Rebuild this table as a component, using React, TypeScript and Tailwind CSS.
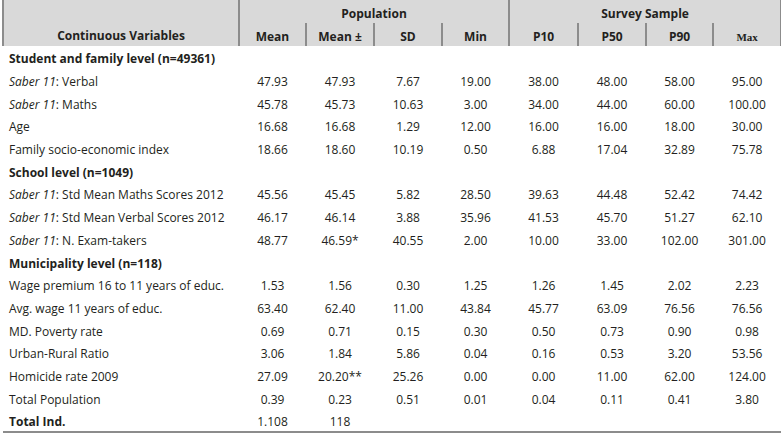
import React from 'react';

type Row = {
    label: React.ReactNode;
    values?: string[];
    bold?: boolean;
};

const saber = <><i>Saber 11</i>: </>;

const rows: Row[] = [
    { label: <>Student and family level (n=49361)</>, bold: true },
    { label: <>{saber}Verbal</>, values: ['47.93', '47.93', '7.67', '19.00', '38.00', '48.00', '58.00', '95.00'] },
    { label: <>{saber}Maths</>, values: ['45.78', '45.73', '10.63', '3.00', '34.00', '44.00', '60.00', '100.00'] },
    { label: 'Age', values: ['16.68', '16.68', '1.29', '12.00', '16.00', '16.00', '18.00', '30.00'] },
    { label: 'Family socio-economic index', values: ['18.66', '18.60', '10.19', '0.50', '6.88', '17.04', '32.89', '75.78'] },
    { label: <>School level (n=1049)</>, bold: true },
    { label: <>{saber}Std Mean Maths Scores 2012</>, values: ['45.56', '45.45', '5.82', '28.50', '39.63', '44.48', '52.42', '74.42'] },
    { label: <>{saber}Std Mean Verbal Scores 2012</>, values: ['46.17', '46.14', '3.88', '35.96', '41.53', '45.70', '51.27', '62.10'] },
    { label: <>{saber}N. Exam-takers</>, values: ['48.77', '46.59*', '40.55', '2.00', '10.00', '33.00', '102.00', '301.00'] },
    { label: <>Municipality level (n=118)</>, bold: true },
    { label: 'Wage premium 16 to 11 years of educ.', values: ['1.53', '1.56', '0.30', '1.25', '1.26', '1.45', '2.02', '2.23'] },
    { label: 'Avg. wage 11 years of educ.', values: ['63.40', '62.40', '11.00', '43.84', '45.77', '63.09', '76.56', '76.56'] },
    { label: 'MD. Poverty rate', values: ['0.69', '0.71', '0.15', '0.30', '0.50', '0.73', '0.90', '0.98'] },
    { label: 'Urban-Rural Ratio', values: ['3.06', '1.84', '5.86', '0.04', '0.16', '0.53', '3.20', '53.56'] },
    { label: 'Homicide rate 2009', values: ['27.09', '20.20**', '25.26', '0.00', '0.00', '11.00', '62.00', '124.00'] },
    { label: 'Total Population', values: ['0.39', '0.23', '0.51', '0.01', '0.04', '0.11', '0.41', '3.80'] },
    { label: 'Total Ind.', values: ['1.108', '118', '', '', '', '', '', ''], bold: true },
];

const subHeads = ['Mean', 'Mean ±', 'SD', 'Min', 'P10', 'P50', 'P90'];

export default function App() {
    return (
        <div className="w-[781px] h-[433px] bg-white text-[#231f20] font-['Open_Sans',sans-serif] text-[12px] leading-[16px]">
            <table className="ml-[2px] w-[778px] border-collapse table-fixed border-b-2 border-b-[#8c8c8c]">
                <colgroup>
                    <col className="w-[236px]" />
                    <col className="w-[67px]" />
                    <col className="w-[68px]" />
                    <col className="w-[68px]" />
                    <col className="w-[67px]" />
                    <col className="w-[69px]" />
                    <col className="w-[68px]" />
                    <col className="w-[67px]" />
                    <col className="w-[68px]" />
                </colgroup>
                <thead className="bg-[#d9d9d9] font-bold">
                    <tr className="h-[23px]">
                        <th rowSpan={2} className="border-l-2 border-r-2 border-[#8c8c8c] align-bottom pb-[2px] text-center font-bold">
                            Continuous Variables
                        </th>
                        <th colSpan={4} className="border-r-2 border-[#8c8c8c] pt-[4px] text-center font-bold">Population</th>
                        <th colSpan={4} className="border-r-2 border-[#8c8c8c] pt-[4px] text-center font-bold">Survey Sample</th>
                    </tr>
                    <tr className="h-[23px]">
                        {subHeads.map((h) => (
                            <th key={h} className="border-r-2 border-[#8c8c8c] pt-[4px] text-center font-bold">{h}</th>
                        ))}
                        <th className="border-r-2 border-[#8c8c8c] pt-[4px] text-center font-['Liberation_Serif',serif] text-[11px] font-bold">Max</th>
                    </tr>
                </thead>
                <tbody>
                    {rows.map((r, i) => (
                        <tr key={i} className="h-[22.7px]">
                            <td className={`pl-[6px] pt-[4px] whitespace-nowrap ${r.bold ? 'font-bold' : ''}`}>{r.label}</td>
                            {Array.from({ length: 8 }).map((_, j) => (
                                <td key={j} className="pt-[4px] text-center">{r.values ? r.values[j] : ''}</td>
                            ))}
                        </tr>
                    ))}
                </tbody>
            </table>
        </div>
    );
}
